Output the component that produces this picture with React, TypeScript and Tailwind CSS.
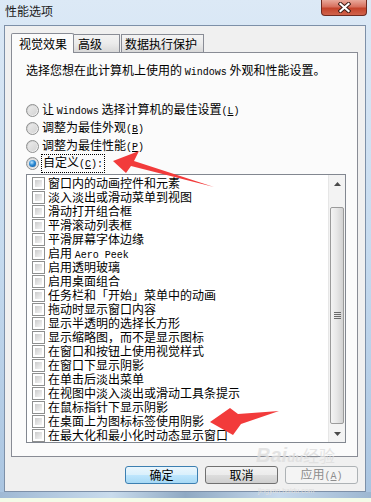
import React from 'react';

const effects = [
    '窗口内的动画控件和元素',
    '淡入淡出或滑动菜单到视图',
    '滑动打开组合框',
    '平滑滚动列表框',
    '平滑屏幕字体边缘',
    ['启用 ', 'Aero Peek'],
    '启用透明玻璃',
    '启用桌面组合',
    '任务栏和「开始」菜单中的动画',
    '拖动时显示窗口内容',
    '显示半透明的选择长方形',
    '显示缩略图，而不是显示图标',
    '在窗口和按钮上使用视觉样式',
    '在窗口下显示阴影',
    '在单击后淡出菜单',
    '在视图中淡入淡出或滑动工具条提示',
    '在鼠标指针下显示阴影',
    '在桌面上为图标标签使用阴影',
    '在最大化和最小化时动态显示窗口',
];

// SimSun style half-width latin
const M = ({ children }: { children: React.ReactNode }) => (
    <span className="font-['Liberation_Mono',monospace] text-[10px]">{children}</span>
);

const Key = ({ k }: { k: string }) => (
    <M>
        (<u>{k}</u>)
    </M>
);

const Radio = ({ checked }: { checked?: boolean }) => (
    <div className="w-[13px] h-[13px] rounded-full border border-[#8e8f8f] bg-gradient-to-br from-[#c9c9c9] to-[#fbfbfb] flex items-center justify-center shrink-0">
        <div className="w-[9px] h-[9px] rounded-full bg-gradient-to-br from-[#ececec] to-[#d3d3d3] flex items-center justify-center">
            {checked && (
                <div className="w-[7px] h-[7px] rounded-full bg-[radial-gradient(circle_at_40%_35%,#bfe6ff_0%,#2a8ad4_45%,#0d4f96_100%)]" />
            )}
        </div>
    </div>
);

const Check = () => (
    <div className="w-[13px] h-[13px] border border-[#8e8f8f] bg-white p-[2px] shrink-0">
        <div className="w-full h-full bg-gradient-to-br from-[#cbcbcb] to-[#f6f6f6]" />
    </div>
);

const Tri = ({ up }: { up?: boolean }) => (
    <svg width="7" height="4" viewBox="0 0 7 4">
        <polygon points={up ? '3.5,0 7,4 0,4' : '0,0 7,0 3.5,4'} fill="#4a4a4a" />
    </svg>
);

const Btn = ({ label, def, disabled }: { label: React.ReactNode; def?: boolean; disabled?: boolean }) => (
    <div
        className={`w-[73px] h-[18px] rounded-[3px] border flex items-center justify-center text-[12px] leading-none ${
            disabled
                ? 'border-[#adb2b5] bg-[#f4f4f4] text-[#8d8d8d]'
                : def
                ? 'border-[#3c7fb1] bg-[linear-gradient(#eaf6fd_0%,#d9f0fc_50%,#bee6fd_51%,#a7d9f5_100%)] text-black'
                : 'border-[#707070] bg-[linear-gradient(#f2f2f2_0%,#ebebeb_50%,#dddddd_51%,#cfcfcf_100%)] text-black'
        }`}
    >
        {label}
    </div>
);

export default function App() {
    return (
        <div className="w-[371px] h-[502px] relative overflow-hidden bg-gradient-to-b from-[#dce9f6] via-[#c6dbef] to-[#a9c4e0] font-['Noto_Sans_CJK_SC',sans-serif] text-[12px] leading-[14px] text-black">
            {/* title bar */}
            <div className="h-[25px] flex items-start justify-between">
                <span className="pl-[5px] pt-[4px] text-[12px] text-[#1b1b1b]">性能选项</span>
                <div className="mr-[4px] w-[46px] h-[16px] rounded-b-[4px] border border-t-0 border-[#6e2a20] bg-[linear-gradient(#e9a99b_0%,#d7705e_45%,#c4432b_55%,#d0634c_100%)] flex items-center justify-center">
                    <svg width="13" height="11" viewBox="0 0 13 11">
                        <path d="M2.5 2 L10.5 9 M10.5 2 L2.5 9" stroke="#3a1a14" strokeWidth="4" strokeLinecap="square" />
                        <path d="M2.5 2 L10.5 9 M10.5 2 L2.5 9" stroke="#ffffff" strokeWidth="2.2" strokeLinecap="square" />
                    </svg>
                </div>
            </div>

            {/* client area */}
            <div className="ml-[4px] mr-[5px] h-[467px] border border-[#7d90a8] bg-[#f0f0f0]">
                {/* tabs */}
                <div className="pt-[6px] pl-[6px] flex items-end h-[26px]">
                    <div className="w-[63px] h-[20px] border border-b-0 border-[#898c95] bg-[#fbfbfb] relative z-10 -mb-px pl-[7px] pt-[3px] rounded-t-[2px]">
                        视觉效果
                    </div>
                    <div className="w-[46px] h-[18px] border border-b-0 border-l-0 border-[#898c95] bg-[linear-gradient(#f3f3f3_0%,#ebebeb_50%,#d8d8d8_100%)] pl-[4px] pt-[2px]">
                        高级
                    </div>
                    <div className="ml-px w-[83px] h-[18px] border border-b-0 border-[#898c95] bg-[linear-gradient(#f3f3f3_0%,#ebebeb_50%,#d8d8d8_100%)] pl-[3px] pt-[2px]">
                        数据执行保护
                    </div>
                </div>

                {/* panel */}
                <div className="ml-[6px] w-[347px] h-[405px] border border-[#898c95] bg-[#fbfbfb]">
                    <div className="pl-[14px] pt-[10px] h-[24px]">
                        选择您想在此计算机上使用的 <M>Windows</M> 外观和性能设置。
                    </div>
                    <div className="mt-[24px] pl-[14px]">
                        <div className="h-[18px] flex items-center gap-[3px]">
                            <Radio />
                            <span>
                                让 <M>Windows</M> 选择计算机的最佳设置<Key k="L" />
                            </span>
                        </div>
                        <div className="h-[18px] flex items-center gap-[3px]">
                            <Radio />
                            <span>
                                调整为最佳外观<Key k="B" />
                            </span>
                        </div>
                        <div className="h-[18px] flex items-center gap-[3px]">
                            <Radio />
                            <span>
                                调整为最佳性能<Key k="P" />
                            </span>
                        </div>
                        <div className="h-[17px] flex items-center gap-[2px]">
                            <Radio checked />
                            <span className="border border-dotted border-black px-px">
                                自定义<Key k="C" />
                                <M>:</M>
                            </span>
                        </div>
                    </div>

                    {/* effects list */}
                    <div className="ml-[14px] mt-[2px] w-[320px] h-[269px] border border-[#828790] bg-white flex">
                        <div className="flex-1 pt-px">
                            {effects.map((e, i) => (
                                <div key={i} className="h-[14px] flex items-center gap-[3px] pl-[5px] whitespace-nowrap">
                                    <Check />
                                    {Array.isArray(e) ? (
                                        <span className="block h-[14px] leading-[14px]">
                                            {e[0]}
                                            <M>{e[1]}</M>
                                        </span>
                                    ) : (
                                        <span className="block h-[14px] leading-[14px]">{e}</span>
                                    )}
                                </div>
                            ))}
                        </div>
                        <div className="w-[17px] flex flex-col bg-[#f3f3f3] border-l border-[#e6e6e6]">
                            <div className="h-[17px] flex items-center justify-center">
                                <Tri up />
                            </div>
                            <div className="h-[15px]" />
                            <div className="h-[217px] mx-px rounded-[2px] border border-[#9b9b9b] bg-[linear-gradient(90deg,#f4f4f4_0%,#e8e8e8_45%,#d2d2d2_100%)] flex flex-col items-center justify-center gap-px">
                                <div className="w-[7px] h-px bg-[#6a6a6a]" />
                                <div className="w-[7px] h-px bg-[#6a6a6a]" />
                                <div className="w-[7px] h-px bg-[#6a6a6a]" />
                                <div className="w-[7px] h-px bg-[#6a6a6a]" />
                            </div>
                            <div className="h-px" />
                            <div className="h-[17px] flex items-center justify-center">
                                <Tri />
                            </div>
                        </div>
                    </div>
                </div>

                {/* buttons */}
                <div className="mt-[9px] pr-[7px] flex justify-end gap-[7px]">
                    <Btn label="确定" def />
                    <Btn label="取消" />
                    <Btn
                        label={
                            <span>
                                应用<Key k="A" />
                            </span>
                        }
                        disabled
                    />
                </div>
            </div>

            {/* bottom frame */}
            <div className="h-[6px] bg-[linear-gradient(90deg,#9fb9d4_0%,#c9dced_30%,#8fa9c3_50%,#c6d9ec_75%,#9db7d1_100%)]" />
            <div className="h-[4px] bg-[#f3fbe8]" />

            {/* watermark */}
            <div className="absolute left-[256px] top-[445px] pointer-events-none select-none text-[#dedede] opacity-80 font-['Liberation_Sans',sans-serif] font-bold italic text-[20px] leading-[20px]">
                Bai<span className="text-[13px]">du</span>
                <span className="font-['Noto_Sans_CJK_SC',sans-serif] not-italic font-normal text-[16px]">经验</span>
            </div>
            <div className="absolute left-[258px] top-[487px] pointer-events-none select-none text-[#dedede] font-['Liberation_Sans',sans-serif] text-[7px] leading-[8px]">
                jingyan.baidu.com
            </div>

            {/* annotation arrows */}
            <svg className="absolute left-0 top-0 pointer-events-none" width="371" height="502">
                <polygon points="113,161 139,151 134,161 214,187 131,166 126,173" fill="#f23b3b" />
                <polygon points="210,422 230,408 238,414 279,411 241,424 233,435" fill="#f23b3b" />
            </svg>
        </div>
    );
}
